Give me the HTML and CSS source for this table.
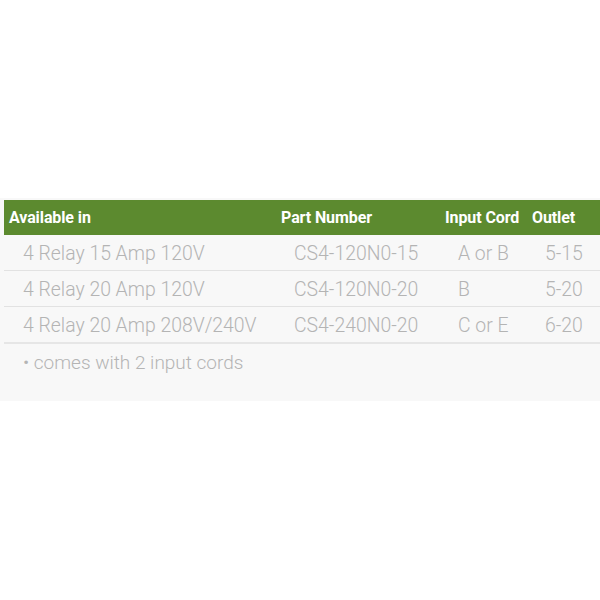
FILE: index.html
```html
<!DOCTYPE html>
<html>
<head>
<meta charset="utf-8">
<link rel="stylesheet" href="styles.css">
</head>
<body>
<div class="panel">
  <table class="spec">
    <colgroup>
      <col class="c1"><col class="c2"><col class="c3"><col class="c4">
    </colgroup>
    <thead>
      <tr><th>Available in</th><th>Part Number</th><th>Input Cord</th><th>Outlet</th></tr>
    </thead>
    <tbody>
      <tr><td>4 Relay 15 Amp 120V</td><td>CS4-120N0-15</td><td>A or B</td><td>5-15</td></tr>
      <tr><td>4 Relay 20 Amp 120V</td><td>CS4-120N0-20</td><td>B</td><td>5-20</td></tr>
      <tr class="last"><td>4 Relay 20 Amp 208V/240V</td><td>CS4-240N0-20</td><td>C or E</td><td>6-20</td></tr>
    </tbody>
  </table>
  <p class="note">• comes with 2 input cords</p>
</div>
</body>
</html>
```
FILE: styles.css
```css
html, body {
  margin: 0;
  padding: 0;
  background: #ffffff;
}
body {
  font-family: Roboto, "Liberation Sans", sans-serif;
}
.panel {
  margin-top: 198px;
  background: #f8f8f8;
  padding: 2px 0 0 4px;
  height: 203px;
  box-sizing: border-box;
}
.spec {
  width: 596px;
  border-collapse: collapse;
  table-layout: fixed;
}
.c1 { width: 272px; }
.c2 { width: 164px; }
.c3 { width: 87px; }
.c4 { width: 73px; }
.spec th {
  background: #5c8a2f;
  color: #ffffff;
  font-weight: 700;
  font-size: 16px;
  text-align: left;
  height: 35px;
  padding: 0 0 0 5px;
  letter-spacing: -0.1px;
}
.spec td {
  color: #b4b4b4;
  font-weight: 300;
  font-size: 19.4px;
  height: 33px;
  padding: 2px 0 0 18px;
  border-bottom: 1px solid #e2e2e2;
  white-space: nowrap;
}
.spec td:first-child {
  padding-left: 19px;
}
.spec tr.last td {
  border-bottom: 2px solid #e6e6e6;
}
.note {
  margin: 0;
  padding: 7px 0 0 19px;
  color: #b4b4b4;
  font-weight: 300;
  font-size: 19px;
}
```
